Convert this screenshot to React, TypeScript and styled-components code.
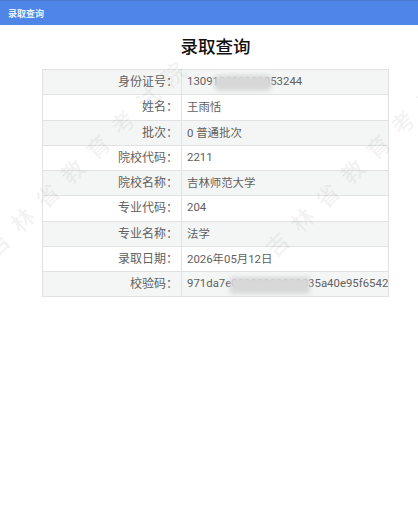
import React from 'react';
import styled, { createGlobalStyle } from 'styled-components';

const rows = [
  { label: '身份证号：', value: '130910000000053244', smudge: 'id' },
  { label: '姓名：', value: '王雨恬' },
  { label: '批次：', value: '0 普通批次' },
  { label: '院校代码：', value: '2211' },
  { label: '院校名称：', value: '吉林师范大学' },
  { label: '专业代码：', value: '204' },
  { label: '专业名称：', value: '法学' },
  { label: '录取日期：', value: '2026年05月12日' },
  { label: '校验码：', value: '971da7e00000000000035a40e95f6542', smudge: 'hash' },
];

export default function App() {
  return (
    <Page>
      <GlobalStyle />
      <TopBar>录取查询</TopBar>
      <Content>
        <Title>录取查询</Title>
        <Table>
          <tbody>
            {rows.map((row) => (
              <Row key={row.label}>
                <LabelCell>{row.label}</LabelCell>
                <ValueCell>
                  {row.value}
                  {row.smudge === 'id' && <IdSmudge />}
                  {row.smudge === 'hash' && <HashSmudge />}
                </ValueCell>
              </Row>
            ))}
          </tbody>
        </Table>
      </Content>
      <Watermarks aria-hidden="true">
        <Mark>吉林省教育考试院</Mark>
        <Mark>吉林省教育考试院</Mark>
        <Mark>吉林省教育考试院</Mark>
        <Mark>吉林省教育考试院</Mark>
      </Watermarks>
    </Page>
  );
}

const GlobalStyle = createGlobalStyle`
  html, body {
    margin: 0;
    padding: 0;
    background: #fff;
    overflow: hidden;
  }

  body {
    font-family: Roboto, "Noto Sans CJK SC", sans-serif;
    color: #606060;
  }
`;

const Page = styled.div`
  position: relative;
  display: flex;
  flex-direction: column;
  width: 418px;
  height: 510px;
  overflow: hidden;
`;

const TopBar = styled.header`
  flex: 0 0 25px;
  box-sizing: border-box;
  padding-left: 8px;
  display: flex;
  align-items: center;
  background: #4f85e6;
  border-top: 1px solid #4a78cf;
  color: #e8f0fc;
  font-size: 9px;
  font-weight: 700;
`;

const Content = styled.main`
  flex: 1;
  display: flex;
  flex-direction: column;
  padding: 0 29px 0 42px;
`;

const Title = styled.h1`
  margin: 0;
  height: 44px;
  line-height: 44px;
  text-align: center;
  font-size: 17.5px;
  font-weight: 500;
  color: #111;
`;

const Table = styled.table`
  width: 347px;
  table-layout: fixed;
  border-collapse: collapse;
  font-size: 12px;
`;

const Row = styled.tr`
  height: 25.25px;

  &:nth-child(odd) td {
    background: #f4f6f6;
  }
`;

const LabelCell = styled.td`
  width: 139px;
  padding: 0 3px 3px 0;
  box-sizing: border-box;
  border: 1px solid #e2e2e2;
  text-align: right;
  white-space: nowrap;
`;

const ValueCell = styled.td`
  position: relative;
  padding: 0 0 2px 5px;
  border: 1px solid #e2e2e2;
  font-size: 11.4px;
  white-space: nowrap;
  overflow: hidden;
`;

const Smudge = styled.div`
  position: absolute;
  background: #d8d8d8;
  filter: blur(2px);
`;

const IdSmudge = styled(Smudge)`
  left: 32px;
  top: 5px;
  width: 58px;
  height: 16px;
  border-radius: 6px;
`;

const HashSmudge = styled(Smudge)`
  left: 48px;
  top: 5px;
  width: 80px;
  height: 17px;
`;

const Watermarks = styled.div`
  position: absolute;
  left: -13px;
  top: 235px;
  display: flex;
  pointer-events: none;
`;

const Mark = styled.div`
  flex: 0 0 128px;
  height: 22px;
  transform-origin: 11px 11px;
  transform: rotate(-44deg);
  font-size: 23px;
  font-weight: 500;
  line-height: 22px;
  letter-spacing: 12px;
  white-space: nowrap;
  color: rgba(120, 120, 120, 0.1);
`;
